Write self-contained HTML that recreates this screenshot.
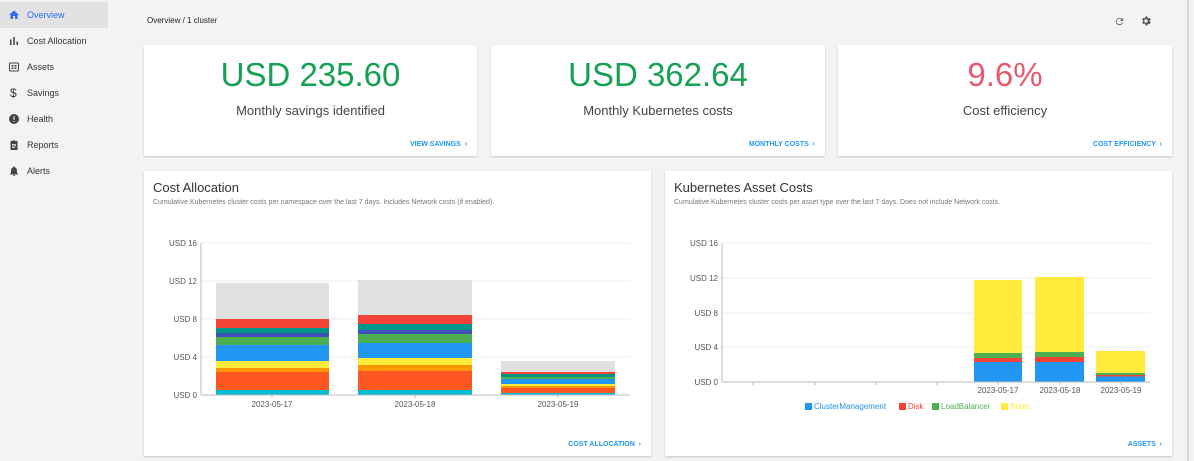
<!DOCTYPE html>
<html><head><meta charset="utf-8"><style>
*{box-sizing:border-box;margin:0;padding:0}
body{width:1194px;height:461px;background:#f3f3f3;font-family:"Liberation Sans",Arial,sans-serif;position:relative;overflow:hidden;color:#333}
.nav{position:absolute;left:0;width:108px;height:26px;font-size:9px;color:#333;display:flex;align-items:center}
.nav.a{background:#e2e2e2;color:#2b6ff0}
.nav svg{position:absolute;left:8px}
.nav span{position:absolute;left:27px}
.card{position:absolute;background:#fff;box-shadow:0 1px 2px rgba(0,0,0,.18)}
.big{position:absolute;left:0;right:0;top:11px;text-align:center;font-size:33px;color:#16a053}
.sub{position:absolute;left:0;right:0;top:58px;text-align:center;font-size:13px;color:#444}
.link{position:absolute;right:10px;bottom:8px;font-size:7px;font-weight:bold;color:#2196f3}
.t{position:absolute;left:9px;top:9px;font-size:13px;color:#333}
.d{position:absolute;left:9px;top:28px;font-size:7px;color:#777}
</style></head><body>
<div class="nav a" style="top:2px"><svg width="12" height="12" viewBox="0 0 24 24"><path d="M10 20v-6h4v6h5v-8h3L12 3 2 12h3v8z" fill="#2b6ff0"/></svg><span>Overview</span></div>
<div class="nav" style="top:28px"><svg width="12" height="12" viewBox="0 0 24 24"><path d="M4 9h3v11H4zM10.5 4h3v16h-3zM17 13h3v7h-3z" fill="#444"/></svg><span>Cost Allocation</span></div>
<div class="nav" style="top:54px"><svg width="12" height="12" viewBox="0 0 24 24"><rect x="3" y="4" width="18" height="16" rx="1" fill="none" stroke="#444" stroke-width="2"/><path d="M7 8h4v3H7zM13 8h4v3h-4zM7 13h4v3H7zM13 13h4v3h-4z" fill="#444"/></svg><span>Assets</span></div>
<div class="nav" style="top:80px"><span style="left:10px;font-size:12px">$</span><span>Savings</span></div>
<div class="nav" style="top:106px"><svg width="12" height="12" viewBox="0 0 24 24"><circle cx="12" cy="12" r="10" fill="#444"/><path d="M11 6h2v8h-2zM11 16h2v2h-2z" fill="#fff"/></svg><span>Health</span></div>
<div class="nav" style="top:132px"><svg width="12" height="12" viewBox="0 0 24 24"><path d="M5 4h5a2 2 0 014 0h5v18H5z" fill="#444"/><path d="M8 10h8v1.5H8zM8 13h8v1.5H8zM8 16h6v1.5H8z" fill="#fff"/></svg><span>Reports</span></div>
<div class="nav" style="top:158px"><svg width="12" height="12" viewBox="0 0 24 24"><path d="M12 22a2 2 0 002-2h-4a2 2 0 002 2zM18 16v-5c0-3-1.6-5.6-4.5-6.3V4a1.5 1.5 0 00-3 0v.7C7.6 5.4 6 8 6 11v5l-2 2v1h16v-1z" fill="#444"/></svg><span>Alerts</span></div>
<div style="position:absolute;left:147px;top:16px;font-size:8px;color:#222">Overview / 1 cluster</div>
<svg style="position:absolute;left:1114px;top:16px" width="11" height="11" viewBox="0 0 24 24"><path d="M17.6 6.4A8 8 0 1019.7 14h-2.1A6 6 0 1112 6c1.7 0 3.1.7 4.2 1.8L13 11h7V4z" fill="#666"/></svg>
<svg style="position:absolute;left:1140px;top:15px" width="12" height="12" viewBox="0 0 24 24"><path d="M19.4 13a7 7 0 000-2l2.1-1.6-2-3.5-2.5 1a7 7 0 00-1.7-1L14.9 3h-4l-.4 2.7a7 7 0 00-1.7 1l-2.5-1-2 3.5L6.4 11a7 7 0 000 2l-2.1 1.6 2 3.5 2.5-1c.5.4 1.1.8 1.7 1l.4 2.9h4l.4-2.7c.6-.3 1.2-.6 1.7-1l2.5 1 2-3.5zM12 15.5A3.5 3.5 0 1112 8.5a3.5 3.5 0 010 7z" fill="#555"/></svg>
<div style="position:absolute;left:1187px;top:0;width:2px;height:461px;background:#d6d6d6"></div>

<div class="card" style="left:144px;top:45px;width:333px;height:111px"><div class="big">USD 235.60</div><div class="sub">Monthly savings identified</div><div class="link">VIEW SAVINGS &nbsp;›</div></div>
<div class="card" style="left:491px;top:45px;width:334px;height:111px"><div class="big">USD 362.64</div><div class="sub">Monthly Kubernetes costs</div><div class="link">MONTHLY COSTS &nbsp;›</div></div>
<div class="card" style="left:838px;top:45px;width:334px;height:111px"><div class="big" style="color:#e85a6e">9.6%</div><div class="sub">Cost efficiency</div><div class="link">COST EFFICIENCY &nbsp;›</div></div>

<div class="card" style="left:144px;top:171px;width:507px;height:285px"><div class="t">Cost Allocation</div><div class="d">Cumulative Kubernetes cluster costs per namespace over the last 7 days. Includes Network costs (if enabled).</div><div class="link">COST ALLOCATION &nbsp;›</div></div>
<div class="card" style="left:665px;top:171px;width:507px;height:285px"><div class="t">Kubernetes Asset Costs</div><div class="d">Cumulative Kubernetes cluster costs per asset type over the last 7 days. Does not include Network costs.</div><div class="link">ASSETS &nbsp;›</div></div>

<svg style="position:absolute;left:0;top:0" width="1194" height="461" font-family="Liberation Sans,Arial,sans-serif" font-size="8" fill="#555">
<g stroke="#ececec"><line x1="201" x2="630" y1="243" y2="243"/><line x1="201" x2="630" y1="281" y2="281"/><line x1="201" x2="630" y1="319" y2="319"/><line x1="201" x2="630" y1="357" y2="357"/></g>
<g text-anchor="end"><text x="197" y="246">USD 16</text><text x="197" y="284">USD 12</text><text x="197" y="322">USD 8</text><text x="197" y="360">USD 4</text><text x="197" y="398">USD 0</text></g>
<g>
<rect x="216" y="283" width="113" height="36" fill="#e0e0e0"/><rect x="216" y="319" width="113" height="9" fill="#f44336"/><rect x="216" y="328" width="113" height="5" fill="#009688"/><rect x="216" y="333" width="113" height="4" fill="#3f51b5"/><rect x="216" y="337" width="113" height="8" fill="#4caf50"/><rect x="216" y="345" width="113" height="16" fill="#2196f3"/><rect x="216" y="361" width="113" height="7" fill="#ffeb3b"/><rect x="216" y="368" width="113" height="4" fill="#ff9800"/><rect x="216" y="372" width="113" height="18" fill="#ff5722"/><rect x="216" y="390" width="113" height="5" fill="#00bcd4"/>
<rect x="358" y="280" width="114" height="35" fill="#e0e0e0"/><rect x="358" y="315" width="114" height="9" fill="#f44336"/><rect x="358" y="324" width="114" height="6" fill="#009688"/><rect x="358" y="330" width="114" height="4" fill="#3f51b5"/><rect x="358" y="334" width="114" height="9" fill="#4caf50"/><rect x="358" y="343" width="114" height="15" fill="#2196f3"/><rect x="358" y="358" width="114" height="7" fill="#ffeb3b"/><rect x="358" y="365" width="114" height="6" fill="#ff9800"/><rect x="358" y="371" width="114" height="19" fill="#ff5722"/><rect x="358" y="390" width="114" height="5" fill="#00bcd4"/>
<rect x="501" y="361" width="114" height="11" fill="#e0e0e0"/><rect x="501" y="372" width="114" height="2" fill="#f44336"/><rect x="501" y="374" width="114" height="3" fill="#009688"/><rect x="501" y="377" width="114" height="2" fill="#4caf50"/><rect x="501" y="379" width="114" height="5" fill="#2196f3"/><rect x="501" y="384" width="114" height="2" fill="#ffeb3b"/><rect x="501" y="386" width="114" height="2" fill="#ff9800"/><rect x="501" y="388" width="114" height="5" fill="#ff5722"/><rect x="501" y="393" width="114" height="2" fill="#00bcd4"/>
</g>
<g stroke="#bbb"><line x1="201" x2="201" y1="243" y2="395"/><line x1="201" x2="630" y1="395" y2="395"/><line x1="272" x2="272" y1="395" y2="398"/><line x1="415" x2="415" y1="395" y2="398"/><line x1="558" x2="558" y1="395" y2="398"/></g>
<g text-anchor="middle"><text x="272" y="407">2023-05-17</text><text x="415" y="407">2023-05-18</text><text x="558" y="407">2023-05-19</text></g>

<g stroke="#ececec"><line x1="722" x2="1150" y1="243" y2="243"/><line x1="722" x2="1150" y1="278" y2="278"/><line x1="722" x2="1150" y1="313" y2="313"/><line x1="722" x2="1150" y1="347" y2="347"/></g>
<g text-anchor="end"><text x="718" y="246">USD 16</text><text x="718" y="281">USD 12</text><text x="718" y="316">USD 8</text><text x="718" y="350">USD 4</text><text x="718" y="385">USD 0</text></g>
<rect x="974" y="280" width="48" height="73" fill="#ffeb3b"/><rect x="974" y="353" width="48" height="5" fill="#4caf50"/><rect x="974" y="358" width="48" height="4" fill="#f44336"/><rect x="974" y="362" width="48" height="20" fill="#2196f3"/>
<rect x="1035" y="277" width="49" height="75" fill="#ffeb3b"/><rect x="1035" y="352" width="49" height="5" fill="#4caf50"/><rect x="1035" y="357" width="49" height="5" fill="#f44336"/><rect x="1035" y="362" width="49" height="20" fill="#2196f3"/>
<rect x="1096" y="351" width="49" height="22" fill="#ffeb3b"/><rect x="1096" y="373" width="49" height="2" fill="#4caf50"/><rect x="1096" y="375" width="49" height="1.5" fill="#f44336"/><rect x="1096" y="376.5" width="49" height="5.5" fill="#2196f3"/>
<g stroke="#bbb"><line x1="722" x2="722" y1="243" y2="382"/><line x1="722" x2="1150" y1="382" y2="382"/><line x1="753" x2="753" y1="382" y2="385"/><line x1="815" x2="815" y1="382" y2="385"/><line x1="876" x2="876" y1="382" y2="385"/><line x1="937" x2="937" y1="382" y2="385"/><line x1="998" x2="998" y1="382" y2="385"/><line x1="1060" x2="1060" y1="382" y2="385"/><line x1="1121" x2="1121" y1="382" y2="385"/></g>
<g text-anchor="middle"><text x="998" y="393">2023-05-17</text><text x="1060" y="393">2023-05-18</text><text x="1121" y="393">2023-05-19</text></g>
<rect x="805" y="403" width="7" height="7" fill="#2196f3"/><text x="814" y="409" fill="#2196f3">ClusterManagement</text>
<rect x="899" y="403" width="7" height="7" fill="#f44336"/><text x="908" y="409" fill="#f44336">Disk</text>
<rect x="932" y="403" width="7" height="7" fill="#4caf50"/><text x="941" y="409" fill="#4caf50">LoadBalancer</text>
<rect x="1001" y="403" width="7" height="7" fill="#ffeb3b"/><text x="1010" y="409" fill="#ffeb3b">Node</text>
</svg>
</body></html>
